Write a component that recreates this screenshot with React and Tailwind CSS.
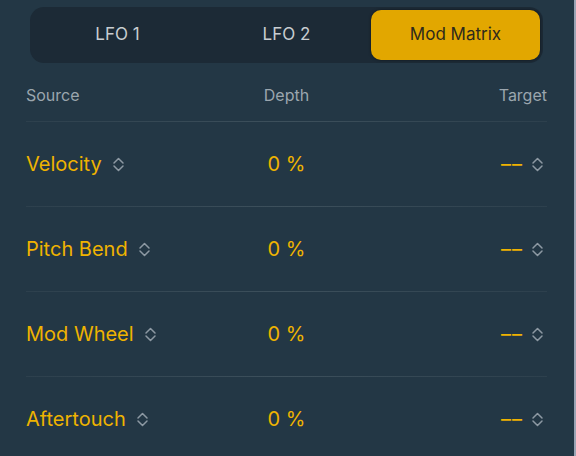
import React, { useState } from 'react';

const rows = [
  { source: 'Velocity', depth: '0 %', target: '––' },
  { source: 'Pitch Bend', depth: '0 %', target: '––' },
  { source: 'Mod Wheel', depth: '0 %', target: '––' },
  { source: 'Aftertouch', depth: '0 %', target: '––' },
];

const tabs = ['LFO 1', 'LFO 2', 'Mod Matrix'];

function UpDown() {
  return (
    <svg width="13" height="15" viewBox="0 0 13 15" fill="none" className="shrink-0">
      <path d="M2 6 L6.5 1.5 L11 6" stroke="#8d99a3" strokeWidth="1.5" strokeLinecap="round" strokeLinejoin="round" />
      <path d="M2 9 L6.5 13.5 L11 9" stroke="#8d99a3" strokeWidth="1.5" strokeLinecap="round" strokeLinejoin="round" />
    </svg>
  );
}

function Divider() {
  return <div className="h-px bg-gradient-to-r from-[#2d404d] via-[#3d505c] to-[#2d404d]" />;
}

export default function App() {
  const [active, setActive] = useState(2);

  return (
    <div className="w-[576px] h-[456px] bg-[#233745] flex overflow-hidden font-['Inter',sans-serif]">
      <div className="flex-1 pt-[7px] pl-[26px] pr-[27px]">
        {/* Tabs */}
        <div className="mx-[4px] h-[56px] p-[3px] rounded-[14px] bg-[#1c2a36] grid grid-cols-3">
          {tabs.map((t, i) => (
            <button
              key={t}
              onClick={() => setActive(i)}
              className={`rounded-[10px] text-[17px] ${
                i === active
                  ? 'bg-[#e2a700] text-[#2e2a1c] shadow-[0_0_3px_rgba(0,0,0,0.5)]'
                  : 'text-[#c8cdd1]'
              }`}
            >
              {t}
            </button>
          ))}
        </div>

        {/* Header */}
        <div className="grid grid-cols-3 mt-[22px] pb-[16px] text-[16px] leading-[20px] text-[#9ba6ae]">
          <span>Source</span>
          <span className="text-center">Depth</span>
          <span className="text-right">Target</span>
        </div>
        <Divider />

        {/* Rows */}
        {rows.map((r, i) => (
          <div key={r.source}>
            <div className="grid grid-cols-3 items-center h-[84px] text-[20px] text-[#efb300]">
              <div className="flex items-center gap-[10px]">
                <span>{r.source}</span>
                <UpDown />
              </div>
              <div className="text-center">{r.depth}</div>
              <div className="flex items-center justify-end gap-[8px] pr-[3px]">
                <span className="tracking-[1px]">{r.target}</span>
                <UpDown />
              </div>
            </div>
            {i < rows.length - 1 && <Divider />}
          </div>
        ))}
      </div>
      <div className="w-[2px] bg-[#9aa4b4]" />
    </div>
  );
}
